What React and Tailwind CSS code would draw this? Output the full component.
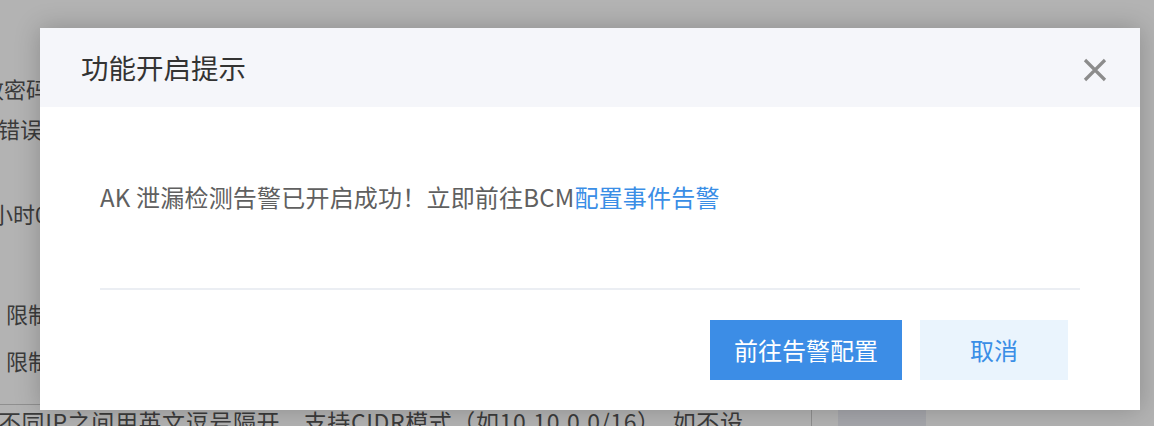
import React from "react";

export default function App() {
  const font = { fontFamily: '"Noto Sans CJK SC", "Noto Sans", sans-serif' };
  return (
    <div
      className="relative w-[1154px] h-[426px] overflow-hidden bg-[#b3b3b3] text-[#3b3b3b]"
      style={font}
    >
      {/* background page (behind overlay) */}
      <div className="flex flex-col pt-[68px] text-[22px]">
        <div className="h-[40px] leading-[40px] -ml-[40px] whitespace-nowrap">无效密码</div>
        <div className="h-[40px] leading-[40px] -ml-[2px] whitespace-nowrap">错误</div>
        <div className="mt-[45px] h-[40px] leading-[40px] -ml-[9px] whitespace-nowrap">小时0</div>
        <div className="mt-[60px] h-[40px] leading-[40px] ml-[6px] whitespace-nowrap">限制</div>
        <div className="mt-[7px] h-[40px] leading-[40px] ml-[6px] whitespace-nowrap">限制</div>
        <div className="mt-[24px] h-[1px] w-[813px] bg-[#8f8f8f]"></div>
        <div className="flex h-[30px]">
          <div className="w-[813px] leading-[32px] text-[23px] tracking-[0.6px] -ml-[2px] whitespace-nowrap overflow-hidden">
            不同IP之间用英文逗号隔开，支持CIDR模式（如10.10.0.0/16），如不设
          </div>
          <div className="w-[1px] bg-[#8f8f8f]"></div>
          <div className="w-[26px]"></div>
          <div className="w-[88px] bg-[#a6a7ac]"></div>
        </div>
      </div>

      {/* modal */}
      <div className="absolute inset-0 pl-[40px] pt-[28px]">
        <div className="w-[1100px] h-[382px] bg-white flex flex-col shadow-[0_0_24px_rgba(0,0,0,0.22)]">
          <div className="h-[79px] bg-[#f5f6fa] flex items-center justify-between pl-[41px] pr-[33px]">
            <span className="text-[27.5px] text-[#333333] leading-none">功能开启提示</span>
            <svg width="24" height="24" viewBox="0 0 24 24" className="mt-[4px]">
              <path d="M2 2 L22 22 M22 2 L2 22" stroke="#8c8c8c" strokeWidth="3.2" strokeLinecap="butt" fill="none" />
            </svg>
          </div>
          <div className="flex flex-col px-[60px]">
            <div className="pt-[76px] h-[181px] text-[24px] tracking-[0.2px] leading-[28px] text-[#606060] whitespace-nowrap">
              AK 泄漏检测告警已开启成功！立即前往BCM<span className="text-[#3a8ee6]">配置事件告警</span>
            </div>
            <div className="h-[2px] bg-[#ebeef3]"></div>
            <div className="flex justify-end gap-[18px] pt-[30px] pr-[12px]">
              <button className="w-[192px] h-[60px] bg-[#3c8de6] text-white text-[24px] leading-none">
                前往告警配置
              </button>
              <button className="w-[148px] h-[60px] bg-[#eaf4fd] text-[#3a8ee6] text-[24px] leading-none">
                取消
              </button>
            </div>
          </div>
        </div>
      </div>
    </div>
  );
}
